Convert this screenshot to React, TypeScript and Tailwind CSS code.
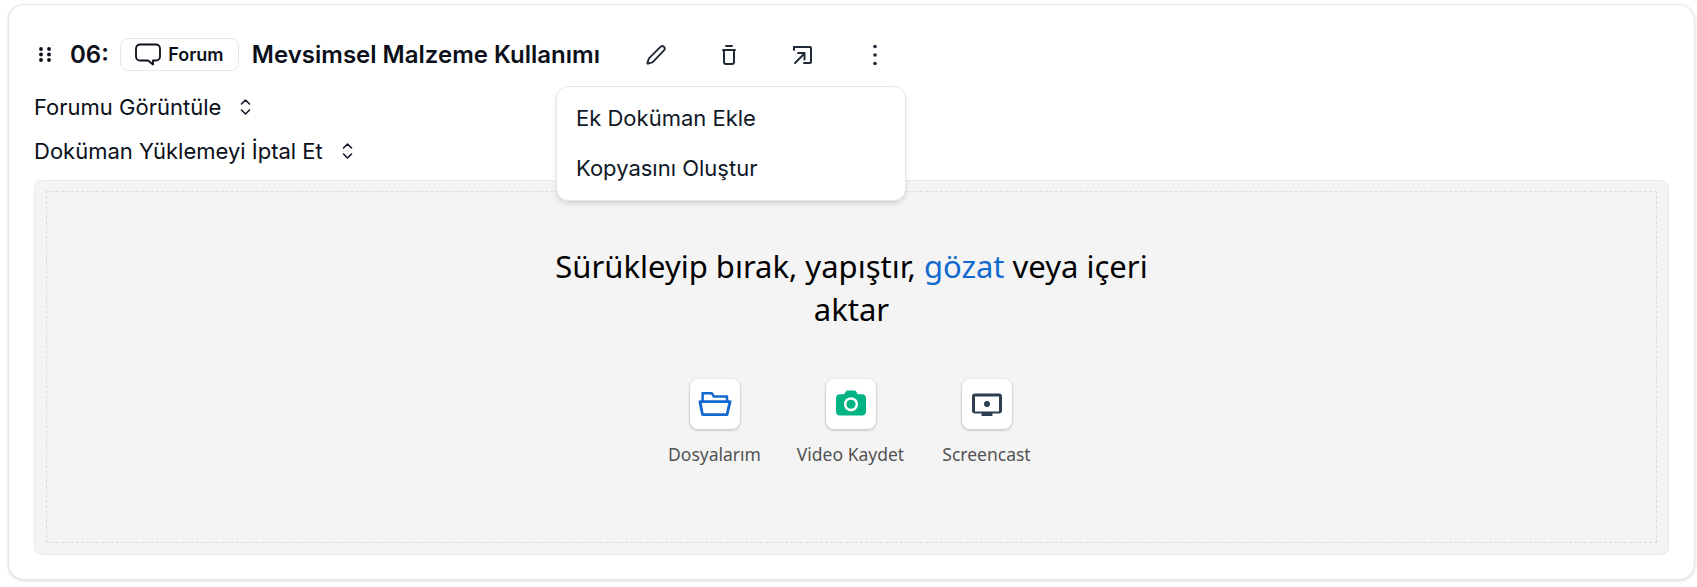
function GripIcon() {
  return (
    <svg width="14" height="17" viewBox="0 0 14 17" fill="#0b0f19">
      <circle cx="3" cy="3" r="1.900" />
      <circle cx="11" cy="3" r="1.900" />
      <circle cx="3" cy="8.500" r="1.900" />
      <circle cx="11" cy="8.500" r="1.900" />
      <circle cx="3" cy="14" r="1.900" />
      <circle cx="11" cy="14" r="1.900" />
    </svg>
  );
}

function BubbleIcon() {
  return (
    <svg width="26" height="23" viewBox="0 0 26 23" fill="none" stroke="#0b0f19" strokeWidth="1.8" strokeLinejoin="round">
      <path d="M5 1.500h16a4 4 0 0 1 4 4v8a4 4 0 0 1-4 4h-3v4l-5-4H5a4 4 0 0 1-4-4v-8a4 4 0 0 1 4-4z" />
    </svg>
  );
}

function UpDownIcon() {
  return (
    <svg width="11" height="16" viewBox="0 0 11 16" fill="none" stroke="#111827" strokeWidth="1.6" strokeLinecap="round" strokeLinejoin="round">
      <path d="M1.500 5l4-4 4 4" />
      <path d="M1.500 11l4 4 4-4" />
    </svg>
  );
}

function PencilIcon() {
  return (
    <svg width="24" height="24" viewBox="0 0 24 24" fill="none">
      <path
        d="M20.200 7.200a2.500 2.500 0 0 0-3.500-3.500L5.200 15.200a2 2 0 0 0-.5.800l-1.250 4.100a.5.5 0 0 0 .600.600l4.100-1.250a2 2 0 0 0 .800-.500z"
        stroke="#1f2937"
        strokeWidth="1.900"
        strokeLinejoin="round"
      />
    </svg>
  );
}

function TrashIcon() {
  return (
    <svg width="24" height="24" viewBox="0 0 24 24" fill="none" stroke="#1f2937" strokeWidth="2" strokeLinecap="round" strokeLinejoin="round">
      <path d="M9 3h6" />
      <path d="M6 7h12" />
      <path d="M7 7v12a2 2 0 0 0 2 2h6a2 2 0 0 0 2-2V7" />
    </svg>
  );
}

function ExpandIcon() {
  return (
    <svg width="24" height="24" viewBox="0 0 24 24" fill="none" stroke="#1f2937" strokeWidth="2" strokeLinecap="round" strokeLinejoin="round">
      <path d="M4 4h16a1 1 0 0 1 1 1v14a1 1 0 0 1-1 1h-6" />
      <path d="M4 4v3" />
      <path d="M5 20l9-9" />
      <path d="M8 10h6.500v6.500" />
    </svg>
  );
}

function DotsIcon() {
  return (
    <svg width="24" height="24" viewBox="0 0 24 24" fill="#1f2937">
      <circle cx="12" cy="3.500" r="1.800" />
      <circle cx="12" cy="12" r="1.800" />
      <circle cx="12" cy="20.500" r="1.800" />
    </svg>
  );
}

function FolderIcon() {
  return (
    <svg className="h-12 w-12" viewBox="0 0 32 32">
      <path
        d="M8.45 22.087l-1.305-6.674h17.678l-1.572 6.674H8.45zm4.975-12.412l1.083 1.765a.823.823 0 00.715.386h7.951V13.5H8.587V9.675h4.838zM26.043 13.5h-1.195v-2.598c0-.463-.336-.75-.798-.75h-8.356l-1.082-1.766A.823.823 0 0013.897 8H7.728c-.462 0-.815.256-.815.718V13.5h-.956a.97.97 0 00-.746.37.972.972 0 00-.19.81l1.724 8.565c.095.44.484.755.933.755H24c.44 0 .824-.3.929-.727l2.043-8.568a.972.972 0 00-.176-.825.967.967 0 00-.753-.38z"
        fill="#1269cf"
        fillRule="evenodd"
      />
    </svg>
  );
}

function CameraIcon() {
  return (
    <svg className="h-12 w-12" viewBox="0 0 32 32">
      <path
        d="M23.5 9.5c1.417 0 2.5 1.083 2.5 2.5v9.167c0 1.416-1.083 2.5-2.5 2.5h-15c-1.417 0-2.5-1.084-2.5-2.5V12c0-1.417 1.083-2.5 2.5-2.500h2.917l1.416-2.167C13 7.167 13.25 7 13.500 7h5c.25 0 .5.167.667.333L20.583 9.500H23.500zM16 11.417a4.706 4.706 0 00-4.750 4.750 4.704 4.704 0 004.750 4.750 4.703 4.703 0 004.750-4.750c0-2.663-2.090-4.750-4.750-4.750zm0 7.825c-1.744 0-3.076-1.332-3.076-3.074 0-1.745 1.333-3.077 3.076-3.077 1.744 0 3.074 1.333 3.074 3.076s-1.330 3.075-3.074 3.075z"
        fill="#02b383"
        fillRule="nonzero"
      />
    </svg>
  );
}

function ScreenIcon() {
  return (
    <svg className="h-12 w-12" viewBox="0 0 32 32">
      <g fill="#2c3e50" fillRule="evenodd">
        <path d="M24.182 9H7.818C6.810 9 6 9.742 6 10.667v10c0 .916.810 1.666 1.818 1.666h4.546V24h7.272v-1.667h4.546c1 0 1.809-.750 1.809-1.666l.009-10C26 9.742 25.182 9 24.182 9zM24 21H8V11h16v10z" />
        <circle cx="16" cy="16" r="2" />
      </g>
    </svg>
  );
}

const sources = [
  { label: "Dosyalarım", icon: <FolderIcon /> },
  { label: "Video Kaydet", icon: <CameraIcon /> },
  { label: "Screencast", icon: <ScreenIcon /> },
];

export default function App() {
  return (
    <div className="h-[587px] bg-white pt-1 pr-0.5 pb-[7px] pl-2 font-['Inter',sans-serif] text-[#0b0f19]">
      <div className="relative h-[576px] rounded-2xl border border-[#e2e8f0] bg-white px-[25px] shadow-[0_1px_3px_rgba(15,23,42,0.16)]">
        {/* Header */}
        <div className="h-20 pt-[33px]">
          <div className="flex h-[33px] items-center">
            <span className="ml-[4px] flex w-[14px] justify-center"><GripIcon /></span>
            <span className="ml-[18px] text-2xl font-semibold">06:</span>
            <span className="ml-[11px] flex h-[33px] w-[119px] items-center justify-center gap-[7px] rounded-lg border border-[#e2e8f0] text-lg font-semibold">
              <BubbleIcon />
              Forum
            </span>
            <span className="ml-[13px] w-[370px] text-2xl font-semibold">Mevsimsel Malzeme Kullanımı</span>
            <div className="ml-[22px] flex items-center gap-[49px]">
              <PencilIcon />
              <TrashIcon />
              <ExpandIcon />
              <DotsIcon />
            </div>
          </div>
        </div>

        {/* Dropdown menu */}
        <div className="absolute top-[81px] left-[547px] z-10 w-[350px] rounded-xl border border-[#e2e8f0] bg-white pt-[6px] pb-[7px] text-[#111827] shadow-md">
          <div className="flex h-[50px] items-center px-[19px] text-[22px]">Ek Doküman Ekle</div>
          <div className="flex h-[50px] items-center px-[19px] text-[22px]">Kopyasını Oluştur</div>
        </div>

        {/* Accordion rows */}
        <div className="flex h-11 items-center gap-[19px] text-[22px]">
          Forumu Görüntüle
          <UpDownIcon />
        </div>
        <div className="flex h-11 items-center gap-[19px] text-[22px]">
          Doküman Yüklemeyi İptal Et
          <UpDownIcon />
        </div>

        {/* Upload panel */}
        <div className="mt-[7px] h-[375px] rounded-lg border border-[#e8e8e8] bg-[#f4f4f4] px-[11px] pt-[10px] pb-[11px] font-['Noto_Sans',sans-serif]">
          <div className="flex h-full flex-col items-center border border-dashed border-[#dcdcdc] pt-[53px]">
            <p className="w-[620px] text-center text-[31px] leading-[43px] text-black">
              Sürükleyip bırak, yapıştır, <span className="text-[#1269cf]">gözat</span> veya içeri aktar
            </p>
            <div className="mt-12 mr-[2px] flex gap-[86px]">
              {sources.map((s) => (
                <div key={s.label} className="flex w-[50px] flex-col items-center">
                  <div className="flex h-[50px] w-[50px] items-center justify-center rounded-lg bg-white shadow-[0_1px_2px_1px_rgba(0,0,0,0.15)]">
                    {s.icon}
                  </div>
                  <span className="mt-[13px] whitespace-nowrap text-[17.5px] leading-6 text-[#525252]">{s.label}</span>
                </div>
              ))}
            </div>
          </div>
        </div>
      </div>
    </div>
  );
}
